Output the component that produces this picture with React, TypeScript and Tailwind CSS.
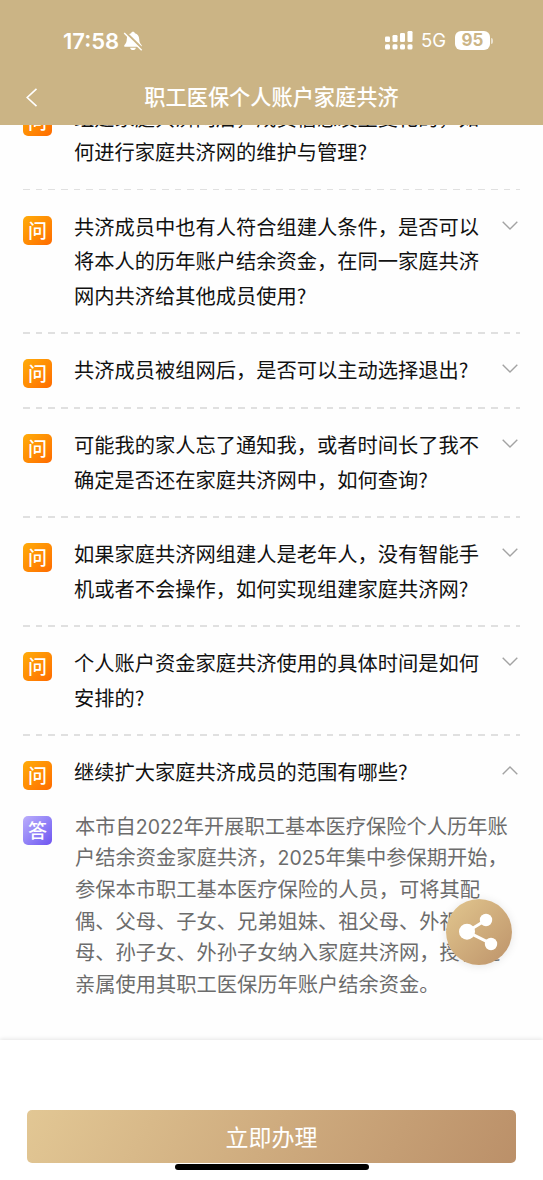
import { ReactNode, useState } from 'react'
import clsx from 'clsx'

interface FaqEntry {
  question: string[]
  answer?: string[]
}

const FAQ: FaqEntry[] = [
  { question: ['组建家庭共济网后，成员信息发生变化的，如', '何进行家庭共济网的维护与管理?'] },
  {
    question: [
      '共济成员中也有人符合组建人条件，是否可以',
      '将本人的历年账户结余资金，在同一家庭共济',
      '网内共济给其他成员使用?',
    ],
  },
  { question: ['共济成员被组网后，是否可以主动选择退出?'] },
  { question: ['可能我的家人忘了通知我，或者时间长了我不', '确定是否还在家庭共济网中，如何查询?'] },
  { question: ['如果家庭共济网组建人是老年人，没有智能手', '机或者不会操作，如何实现组建家庭共济网?'] },
  { question: ['个人账户资金家庭共济使用的具体时间是如何', '安排的?'] },
  {
    question: ['继续扩大家庭共济成员的范围有哪些?'],
    answer: [
      '本市自2022年开展职工基本医疗保险个人历年账',
      '户结余资金家庭共济，2025年集中参保期开始，',
      '参保本市职工基本医疗保险的人员，可将其配',
      '偶、父母、子女、兄弟姐妹、祖父母、外祖父',
      '母、孙子女、外孙子女纳入家庭共济网，授权近',
      '亲属使用其职工医保历年账户结余资金。',
    ],
  },
]

function StatusBar() {
  return (
    <div className="flex h-[81px] items-center pl-[63px] pr-[50px] font-['Inter']">
      <span className="text-[22px] font-semibold leading-none">17:58</span>
      <svg className="ml-[4px] h-[20px] w-[20px]" viewBox="0 0 20 20" fill="currentColor">
        <path d="M10 .8c1 0 1.800.6 1.900 1.500 2.600.8 4.200 2.900 4.300 5.700.1 3 .8 4.300 2.300 5.900.7.8.3 1.900-.8 1.900H2.300c-1.100 0-1.500-1.100-.8-1.900C3 12.300 3.700 11 3.800 8c.1-2.800 1.700-4.900 4.300-5.700C8.200 1.400 9 .8 10 .8z" />
        <path d="M7.100 16.800h5.800c-.3 1.400-1.400 2.300-2.900 2.300s-2.600-.9-2.900-2.300z" />
        <path d="M2.600 1.400 19.600 18" stroke="#cbb485" strokeWidth="2.400" />
        <path d="M1.200 2 18.700 19.200" stroke="currentColor" strokeWidth="1.500" />
      </svg>
      <svg className="ml-auto h-[20px] w-[28px]" viewBox="0 0 28 20" fill="currentColor">
        <rect x="0" y="5.500" width="5" height="5.500" rx="1.300" />
        <rect x="7.500" y="4" width="5" height="7" rx="1.300" />
        <rect x="15" y="2" width="5" height="9" rx="1.300" />
        <rect x="22.500" y="0" width="5" height="11" rx="1.300" />
        <rect x="0" y="13.200" width="5" height="5.200" rx="1.500" />
        <rect x="7.500" y="13.200" width="5" height="5.200" rx="1.500" />
        <rect x="15" y="13.200" width="5" height="5.200" rx="1.500" />
        <rect x="22.500" y="13.200" width="5" height="5.200" rx="1.500" />
      </svg>
      <span className="ml-[8px] text-[18.5px] font-normal leading-none">5G</span>
      <span className="ml-[9px] flex h-[19px] w-[35px] items-center justify-center rounded-[6px] bg-white text-[17px] font-bold leading-none text-[#cbb485]">
        95
      </span>
      <span className="ml-[1px] h-[6px] w-[2px] rounded-r-full bg-white/60" />
    </div>
  )
}

function Badge({ children, purple }: { children: ReactNode; purple?: boolean }) {
  return (
    <span
      className={clsx(
        'flex h-[29px] w-[29px] shrink-0 items-center justify-center rounded-[5px] bg-linear-to-br pb-[2px] text-[19px] font-medium leading-none text-white',
        purple ? 'from-[#bcaefb] to-[#6f52f0]' : 'from-[#ffac0a] to-[#ff6a00]'
      )}
    >
      {children}
    </span>
  )
}

function Chevron({ open }: { open: boolean }) {
  return (
    <svg
      className={clsx('h-[9px] w-[16px]', open && 'rotate-180')}
      viewBox="0 0 16 9"
      fill="none"
      stroke="#a3a3a3"
      strokeWidth="1.4"
    >
      <path d="M.7.8 8 8 15.300.8" />
    </svg>
  )
}

function FaqItem({ entry, open, onToggle }: { entry: FaqEntry; open: boolean; onToggle: () => void }) {
  return (
    <li>
      <button onClick={onToggle} className="flex w-full items-start pb-[19.2px] pt-[19.4px] text-left">
        <span className="mt-[6.1px]">
          <Badge>问</Badge>
        </span>
        <span className="ml-[22px] flex-1 whitespace-nowrap text-[20.25px] leading-[34.4px] text-[#111]">
          {entry.question.map(line => (
            <span key={line} className="block">{line}</span>
          ))}
        </span>
        <span className="mr-[2px] mt-[11px] flex">
          <Chevron open={open} />
        </span>
      </button>
      {open && entry.answer ? (
        <div className="-mt-[1px] flex">
          <span className="mt-[7px]">
            <Badge purple>答</Badge>
          </span>
          <p className="ml-[23px] mt-[1px] whitespace-nowrap text-[20.25px] leading-[31.650px] text-[#6c6c6c]">
            {entry.answer.map(line => (
              <span key={line} className="block">
                {line.split(/(\d+)/).map((part, i) => (
                  <span key={i} className={/\d/.test(part) ? "font-['Inter'] text-[19.5px] leading-none" : ''}>{part}</span>
                ))}
              </span>
            ))}
          </p>
        </div>
      ) : (
        <div className="h-[1.6px] bg-[repeating-linear-gradient(90deg,#e0e0e0_0_6.600px,transparent_6.600px_12.650px)]" />
      )}
    </li>
  )
}

export default function App() {
  const [openIndex, setOpenIndex] = useState(6)

  return (
    <div className="relative flex h-[1180px] w-[543px] flex-col overflow-hidden bg-[#fefefe] font-['Noto_Sans_CJK_SC',sans-serif]">
      <header className="h-[125px] shrink-0 bg-[#cbb485] text-white">
        <StatusBar />
        <div className="flex h-[32px] items-center">
          <svg className="ml-[26px] h-[19px] w-[12px]" viewBox="0 0 12 19" fill="none" stroke="currentColor" strokeWidth="1.600">
            <path d="M10.500.8 1.200 9.500l9.300 8.700" />
          </svg>
          <h1 className="mb-[2px] mr-[38px] flex-1 text-center text-[21.2px] font-medium leading-[30px]">
            职工医保个人账户家庭共济
          </h1>
        </div>
      </header>

      <main className="h-[915px] shrink-0 overflow-hidden px-[23px]">
        <ul className="-mt-[43.7px]">
          {FAQ.map((entry, index) => (
            <FaqItem
              key={index}
              entry={entry}
              open={openIndex === index}
              onToggle={() => setOpenIndex(openIndex === index ? -1 : index)}
            />
          ))}
        </ul>
      </main>

      <button
        aria-label="分享"
        className="absolute left-[446px] top-[899px] flex h-[66px] w-[66px] items-center justify-center rounded-full bg-linear-to-br from-[#e2c78f] to-[#bd936a] shadow-[0_1px_10px_rgba(0,0,0,0.1)]"
      >
        <svg className="h-[40px] w-[40px]" viewBox="0 0 40 40" fill="#fff">
          <path d="M8 19.700 27 8M8 19.700l24 12" stroke="#fff" strokeWidth="3" />
          <circle cx="8" cy="19.700" r="8" />
          <circle cx="27" cy="8" r="6.200" />
          <circle cx="32" cy="32" r="6.200" />
        </svg>
      </button>

      <footer className="relative flex flex-1 flex-col items-center bg-white pt-[70px] shadow-[0_-1px_4px_rgba(0,0,0,0.1)]">
        <button className="h-[53px] w-[489px] rounded-[5px] bg-[linear-gradient(120deg,#e2c794,#bb9069)] text-[23px] leading-[53px] text-white">
          立即办理
        </button>
        <div className="mt-px h-[6px] w-[194px] rounded-full bg-black" />
      </footer>
    </div>
  )
}
